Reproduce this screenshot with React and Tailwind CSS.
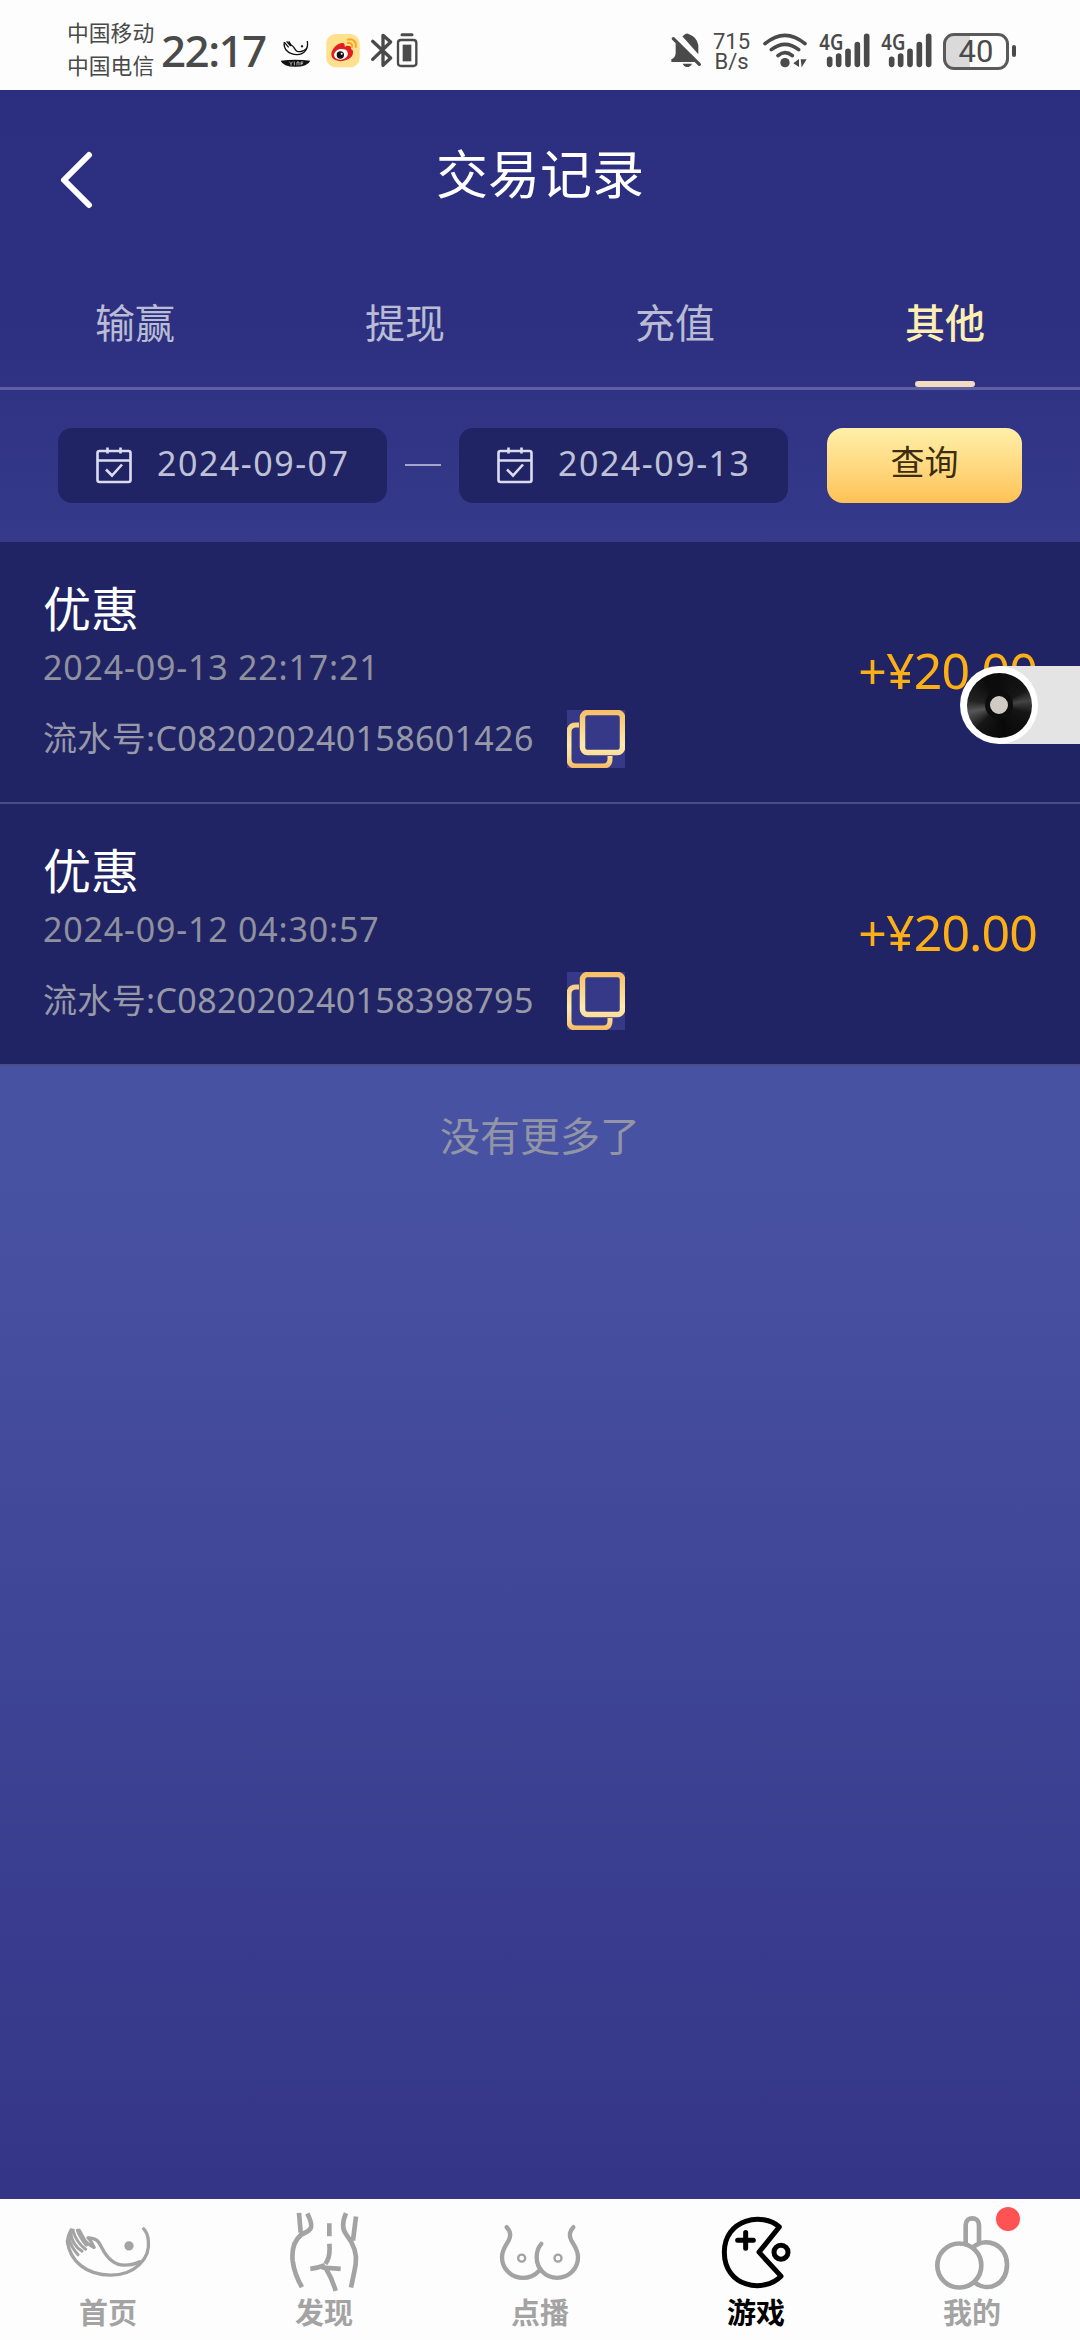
import React, { useState } from 'react';
import clsx from 'clsx';

const tabs = ['输赢', '提现', '充值', '其他'];

const records = [
  { id: 'C082020240158601426', title: '优惠', time: '2024-09-13 22:17:21', amount: '+¥20.00' },
  { id: 'C082020240158398795', title: '优惠', time: '2024-09-12 04:30:57', amount: '+¥20.00' },
];

const SignalBars = () => (
  <svg className="h-[40px] w-[51px] overflow-visible" viewBox="533 90 153 120">
    <text x="534" y="150" fontSize="62" fontWeight="600" textLength="72" lengthAdjust="spacingAndGlyphs" fill="#4a4a4a">4G</text>
    <g stroke="#4a4a4a" strokeWidth="17" strokeLinecap="round">
      <path d="M565 178v15M592 168v25M620 154v39M648 134v59M676 109v84" />
    </g>
  </svg>
);

const StatusBar = () => (
  <header className="flex h-[90px] items-center bg-[#fdfdfd] pl-[67px] pr-[64px] text-[#4a4a4a]">
    <div className="flex w-[94px] flex-col pt-[8px] text-[21.8px] leading-[33px]">
      <span>中国移动</span>
      <span>中国电信</span>
    </div>
    <span className="w-[119px] pt-[10px] font-['Noto_Sans'] text-[44px] leading-[50px] font-medium tracking-[-1.6px]">22:17</span>
    {/* notification icons */}
    <svg className="mt-[10px] h-[40px] w-[31px]" viewBox="720 90 93 120" fill="none" stroke="#111">
      <path d="M733 126c-4 22 14 38 38 38 21 0 35-16 31-41" strokeWidth="4" />
      <path d="M734 128l12 14M740 124l12 14M746 124l8 12c8 0 8 14 18 18 10 2 22-2 27-8" strokeWidth="4" />
      <circle cx="786" cy="139" r="3" fill="#111" />
      <path d="M722 182q44-6 89 0-8 18-45 18t-44-18z" fill="#111" stroke="none" />
      <path d="M748 185l5 6v6M753 191l5-6M763 185v11M771 196v-10h6v10M783 196v-10h7M783 191h6" stroke="#fff" strokeWidth="2" />
    </svg>
    <svg className="ml-[15px] mt-[10px] h-[40px] w-[34px]" viewBox="857 90 102 120">
      <rect x="858" y="102" width="100" height="100" rx="28" fill="#ffe08c" />
      <path d="M873 163c0-17 20-34 32-34 8 0 9 6 8 11 11-5 21-2 19 7 9 3 7 17 1 24-19 19-60 16-60-8z" fill="#e02020" />
      <ellipse cx="902" cy="163" rx="21" ry="16" fill="#fff" transform="rotate(-12 902 163)" />
      <circle cx="900" cy="165" r="11" fill="#111" />
      <circle cx="904" cy="161" r="3" fill="#fff" />
      <path d="M922 119c15-4 27 6 24 22M922 129c9-2 15 4 13 12" stroke="#f6a623" strokeWidth="6" fill="none" strokeLinecap="round" />
    </svg>
    <svg className="ml-[9px] mt-[10px] h-[40px] w-[50px]" viewBox="985 90 150 120" fill="none" stroke="#4a4a4a">
      <path d="M996 124l54 50-23 22v-90l23 20-54 52" strokeWidth="10" strokeLinejoin="round" strokeLinecap="round" />
      <path d="M1072 128q0-8 9-8h37q9 0 9 8v62q0 8-9 8h-37q-9 0-9-8z" strokeWidth="7" />
      <path d="M1084 104h30" strokeWidth="9" strokeLinecap="round" />
      <path d="M1086 134h26v50h-26z" fill="#4a4a4a" stroke="none" />
    </svg>
    <div className="flex-1" />
    <svg className="mt-[10px] h-[40px] w-[32px]" viewBox="80 90 96 120" fill="#4a4a4a">
      <path d="M97 129l64 57H84v-8q13-6 13-20zM117 109q6-3 8-6 6-5 12 0 24 8 28 33v27z" />
      <path d="M90 116l78 77" stroke="#4a4a4a" strokeWidth="10" strokeLinecap="round" />
      <path d="M118 191h28q-5 10-14 10t-14-10z" />
    </svg>
    <div className="ml-[9px] mt-[13px] flex w-[41px] flex-col items-center font-[Roboto] text-[22px] leading-[20px]">
      <span>715</span>
      <span>B/s</span>
    </div>
    <svg className="ml-[10px] mt-[10px] h-[40px] w-[46px]" viewBox="363 90 138 120" fill="none" stroke="#4a4a4a" strokeWidth="11" strokeLinecap="round">
      <path d="M372 131q60-50 120 0M391 149q41-32 82 0M411 167q21-18 43 0" />
      <circle cx="432" cy="188" r="14" fill="#4a4a4a" stroke="none" />
      <path d="M457 190l17-13v24zM479 178h18l-15 24z" fill="#4a4a4a" stroke="none" />
    </svg>
    <span className="ml-[11px] mt-[10px]"><SignalBars /></span>
    <span className="ml-[11px] mt-[10px]"><SignalBars /></span>
    <div className="ml-[11px] mt-[12px] flex items-center">
      <div className="flex h-[37px] w-[66px] items-center justify-center rounded-[11px] border-[3px] border-[#5a5a5a] bg-linear-to-r from-[#dadada] from-40% to-[#fdfdfd] to-40% font-[Roboto] text-[31px] leading-none">
        40
      </div>
      <i className="ml-[3px] h-[12px] w-[4px] rounded-full bg-[#4a4a4a]" />
    </div>
  </header>
);

const DateField = ({ value }) => (
  <button className="flex h-[75px] w-[329px] items-center rounded-[14px] bg-[#212464] pl-[38px]">
    <svg className="h-[38px] w-[37px]" viewBox="0 0 37 38" fill="none" stroke="#dcdcf0" strokeWidth="2.6">
      <rect x="1.5" y="5" width="33" height="31" rx="2" />
      <path d="M1.5 14.500h33M11.500 1.500v6M24.500 1.500v6M10 23.500l6 6 10-11" />
    </svg>
    <span className="ml-[24px] -mt-[4px] text-[34px] leading-[40px] tracking-[1.5px] whitespace-nowrap text-[#bfc1d6]">{value}</span>
  </button>
);

const CopyIcon = () => (
  <svg className="h-[58px] w-[58px]" viewBox="0 0 58 58" fill="none">
    <defs>
      <linearGradient id="gold" x1="0" y1="0" x2="0" y2="58" gradientUnits="userSpaceOnUse">
        <stop offset="0" stopColor="#f8bf66" />
        <stop offset="0.6" stopColor="#fde9ae" />
        <stop offset="0.8" stopColor="#fbdc98" />
        <stop offset="1" stopColor="#f5b960" />
      </linearGradient>
    </defs>
    <rect width="58" height="58" fill="#353987" />
    <path d="M12 15H9q-7 0-7 7v27q0 7 7 7h27q7 0 7-7v-3" stroke="url(#gold)" strokeWidth="5" />
    <rect x="15.5" y="2.500" width="40" height="40" rx="5" stroke="url(#gold)" strokeWidth="5.500" />
  </svg>
);

const RecordRow = ({ record }) => (
  <li className="flex h-[262px] items-center justify-between border-b-2 border-[#4b4d86] bg-[#212464] pr-[43px] pl-[43px]">
    <div className="flex flex-col pt-[2px]">
      <h2 className="text-[48px] leading-[60px] text-white">{record.title}</h2>
      <time className="text-[34px] leading-[56px] tracking-[0.8px] text-[#8f919f]">{record.time}</time>
      <div className="mt-[15px] flex items-center">
        <p className="w-[524px] pb-[2px] text-[34px] leading-[56px] tracking-[0.35px] whitespace-nowrap text-[#9799a8]">流水号:{record.id}</p>
        <CopyIcon />
      </div>
    </div>
    <strong className="pb-[3px] text-[50px] font-normal tracking-[-0.9px] text-[#fdb015]">{record.amount}</strong>
  </li>
);

// Each nav icon keeps its own viewBox, three units per pixel
const navItems = [
  {
    label: '首页',
    viewBox: '0 57 648 290',
    icon: (
      <g strokeWidth="10">
        <path d="M202 183c8 60 57 102 130 102 72 0 120-50 113-103-1-16-6-28-14-36" />
        <path d="M264 173c24 0 31 9 41 29 17 34 38 53 68 53 18 0 33-3 46-10" />
        <path d="M203 189c-3-17 5-30 10-40l7 1M207 175c4 20 15 35 27 49M211 153c3 27 14 48 35 60M218 150c8 25 20 44 39 57M232 150c7 22 18 34 27 45M238 150l17 31c9 10 16 17 27 21" strokeWidth="9" />
        <path d="M266 174l7 10 9 17" />
        <circle cx="387" cy="197" r="9" fill="currentColor" />
      </g>
    ),
  },
  {
    label: '发现',
    viewBox: '648 57 648 290',
    icon: (
      <g strokeWidth="14" strokeLinecap="butt">
        <path d="M897 98l5 59M922 100q16 32 10 44c-5 10-17 14-29 20-24 20-28 47-25 78 4 31 15 57 28 79" />
        <path d="M1038 99c-12 28-10 50 0 63 27 34 33 63 29 90-4 25-9 46-14 70M1068 109l-9 72" />
        <path d="M988 129v39M988 191q4 40-12 60M931 266q25-3 44-11M965 262l57 4M976 262q20 32 31 70" />
      </g>
    ),
  },
  {
    label: '点播',
    viewBox: '96 57 648 290',
    icon: (
      <g strokeWidth="13">
        <path d="M320 141c12 12 14 24 6 40-10 18-20 28-20 50 0 34 27 62 63 62q28 0 47-20" />
        <path d="M520 141c-12 12-14 24-6 40 10 18 20 28 20 50 0 34-27 62-63 62-35 0-61-28-61-62 0-16 5-30 14-40" />
        <circle cx="365" cy="234" r="10.500" strokeWidth="7" />
        <circle cx="474" cy="234" r="10.500" strokeWidth="7" />
      </g>
    ),
  },
  {
    label: '游戏',
    viewBox: '-156 57 648 290',
    icon: (
      <g strokeWidth="15">
        <path d="M238 140c-50-45-165-24-165 76 0 105 118 125 170 72l-66-72z" />
        <path d="M137 157v47M113 180h47" />
        <circle cx="243" cy="216" r="21" />
      </g>
    ),
  },
  {
    label: '我的',
    viewBox: '492 57 648 290',
    badge: true,
    icon: (
      <g strokeWidth="14">
        <circle cx="778" cy="256" r="66" />
        <path d="M797 192v-57c0-27 40-27 40 0v55M818 202c40-35 102-8 103 50 0 60-56 86-95 56" />
      </g>
    ),
  },
];

const BottomNav = ({ active, onChange }) => (
  <nav className="flex h-[141px] bg-[#fdfdfd]">
    {navItems.map((item) => (
      <button
        key={item.label}
        onClick={() => onChange(item.label)}
        className={clsx('relative flex w-[216px] flex-col items-center', active === item.label ? 'text-black' : 'text-[#a3a3a3]')}
      >
        <svg className="h-[97px] w-[216px]" viewBox={item.viewBox} fill="none" stroke="currentColor" strokeLinecap="round" strokeLinejoin="round">
          {item.icon}
        </svg>
        <span className="-mt-[3px] text-[29px] leading-[40px] font-bold">{item.label}</span>
        {item.badge && <i className="absolute top-[8px] left-[132px] h-[24px] w-[24px] rounded-full bg-[#ff5252]" />}
      </button>
    ))}
  </nav>
);

const FloatingPlayer = () => (
  <div className="absolute top-[666px] right-0 flex h-[78px] w-[120px] items-center">
    <div className="absolute right-0 h-full w-[81px] bg-[#e4e4e4]" />
    <div className="relative flex h-[78px] w-[78px] items-center justify-center rounded-full bg-white">
      <div className="flex h-[65px] w-[65px] items-center justify-center rounded-full bg-[conic-gradient(#0c0c0c_0deg,#161616_60deg,#444_80deg,#151515_105deg,#080808_170deg,#161616_225deg,#575757_258deg,#222_280deg,#0c0c0c_330deg)]">
        <div className="h-[28px] w-[28px] rounded-full border-[5px] border-[#0d0d0d] bg-[#cfcbc4]" />
      </div>
    </div>
  </div>
);

export default function App() {
  const [tab, setTab] = useState('其他');
  const [nav, setNav] = useState('游戏');

  return (
    <div className="relative flex h-[2340px] w-[1080px] flex-col overflow-hidden font-['Noto_Sans','Noto_Sans_CJK_SC',sans-serif]">
      <StatusBar />

      <main className="flex flex-1 flex-col bg-[linear-gradient(180deg,#2c2f80_0px,#2d3081_230px,#363a8b_460px,#4852a2_985px,#4852a3_1090px,#343587_2100px)]">
        <div className="flex h-[174px] items-center pl-[58px]">
          <svg className="mt-[6px] h-[60px] w-[38px]" viewBox="0 0 38 60" fill="none" stroke="#fff" strokeWidth="6" strokeLinecap="round" strokeLinejoin="round">
            <path d="M31 5L6 30l25 25" />
          </svg>
          <h1 className="-mt-[6px] mr-[96px] flex-1 text-center text-[52px] leading-[60px] text-white">交易记录</h1>
        </div>

        <div className="flex h-[126px] border-b-[3px] border-[#5d60a1]">
          {tabs.map((name) => (
            <button
              key={name}
              onClick={() => setTab(name)}
              className={clsx('flex flex-1 flex-col items-center text-[40px] leading-[60px]', tab === name ? 'font-medium text-[#fdeeb2]' : 'text-[#babcd3]')}
            >
              <span className="mt-[29px]">{name}</span>
              {tab === name && <i className="mt-auto h-[6px] w-[60px] rounded-[3px] bg-[#f3dcc0]" />}
            </button>
          ))}
        </div>

        <div className="flex h-[152px] items-center px-[58px] pb-[2px]">
          <DateField value="2024-09-07" />
          <i className="mx-[18px] h-[2px] w-[36px] bg-[#a3a5c9]" />
          <DateField value="2024-09-13" />
          <button className="ml-auto h-[75px] w-[195px] rounded-[16px] bg-linear-to-b from-[#fff0a8] to-[#ffc255] pb-[5px] text-[34px] text-[#3b2d0e]">
            查询
          </button>
        </div>

        <ul>
          {records.map((record) => (
            <RecordRow key={record.id} record={record} />
          ))}
        </ul>
        <p className="mt-[40px] text-center text-[40px] leading-[60px] text-[#9195a6]">没有更多了</p>
      </main>

      <BottomNav active={nav} onChange={setNav} />
      <FloatingPlayer />
    </div>
  );
}
